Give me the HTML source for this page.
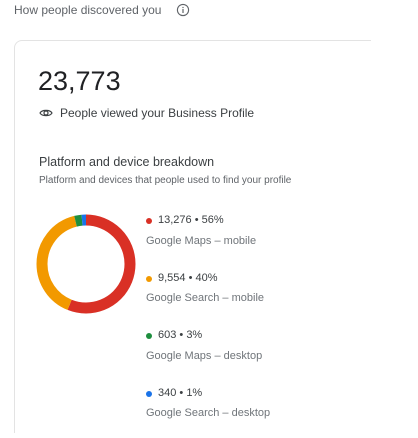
<!DOCTYPE html>
<html style="overflow:hidden;height:438px"><head><style>
body{margin:0;width:418px;height:438px;background:#fff;font-family:"Liberation Sans",sans-serif;position:relative;overflow:hidden;color:#3c4043}
.a{position:absolute;white-space:nowrap}
.card{position:absolute;left:14px;top:40px;width:356px;height:392px;border:1px solid #e3e3e3;border-right:none;border-bottom:none;border-radius:8px 0 0 0}
.dot{position:absolute;width:6px;height:6px;border-radius:50%}
.v{font-size:11px;color:#3c4043}
.l{font-size:11px;color:#70757a}
</style></head><body>
<div class="a" style="left:14px;top:3px;font-size:12px;color:#5f6368">How people discovered you</div>
<svg class="a" style="left:176px;top:3px" width="14" height="14" viewBox="0 0 14 14"><circle cx="7" cy="7" r="5.6" fill="none" stroke="#5f6368" stroke-width="1.1"/><rect x="6.4" y="6" width="1.2" height="4" fill="#5f6368"/><rect x="6.4" y="3.9" width="1.2" height="1.2" fill="#5f6368"/></svg>
<div class="card"></div>
<div class="a" style="left:38px;top:66px;font-size:27px;color:#202124">23,773</div>
<svg class="a" style="left:39px;top:108px" width="14" height="10" viewBox="0 0 14 10"><path d="M1 5C3 1.5 11 1.5 13 5C11 8.5 3 8.5 1 5Z" fill="none" stroke="#3c4043" stroke-width="1.2"/><circle cx="7" cy="5" r="2" fill="none" stroke="#3c4043" stroke-width="1.2"/></svg>
<div class="a" style="left:60px;top:106px;font-size:12px">People viewed your Business Profile</div>
<div class="a" style="left:39px;top:155px;font-size:12.5px;color:#3c4043">Platform and device breakdown</div>
<div class="a" style="left:39px;top:175px;font-size:10px;color:#5f6368">Platform and devices that people used to find your profile</div>
<svg class="a" style="left:36px;top:212px" width="100" height="106" viewBox="0 0 100 106">
<g transform="translate(50,52) rotate(-90)" fill="none" stroke-width="11">
<circle r="44" stroke="#d93025" stroke-dasharray="154.8 1000" />
<circle r="44" stroke="#f29900" stroke-dasharray="0 154.8 110.6 1000"/>
<circle r="44" stroke="#1e8e3e" stroke-dasharray="0 265.4 6.6 1000"/>
<circle r="44" stroke="#1a73e8" stroke-dasharray="0 272 4.5 1000"/>
</g></svg>
<div class="dot" style="left:146px;top:218px;background:#d93025"></div>
<div class="a v" style="left:158px;top:214px">13,276 • 56%</div>
<div class="a l" style="left:146px;top:235px">Google Maps – mobile</div>
<div class="dot" style="left:146px;top:276px;background:#f29900"></div>
<div class="a v" style="left:158px;top:272px">9,554 • 40%</div>
<div class="a l" style="left:146px;top:292px">Google Search – mobile</div>
<div class="dot" style="left:146px;top:333px;background:#1e8e3e"></div>
<div class="a v" style="left:158px;top:329px">603 • 3%</div>
<div class="a l" style="left:146px;top:350px">Google Maps – desktop</div>
<div class="dot" style="left:146px;top:391px;background:#1a73e8"></div>
<div class="a v" style="left:158px;top:387px">340 • 1%</div>
<div class="a l" style="left:146px;top:407px">Google Search – desktop</div>
</body></html>
